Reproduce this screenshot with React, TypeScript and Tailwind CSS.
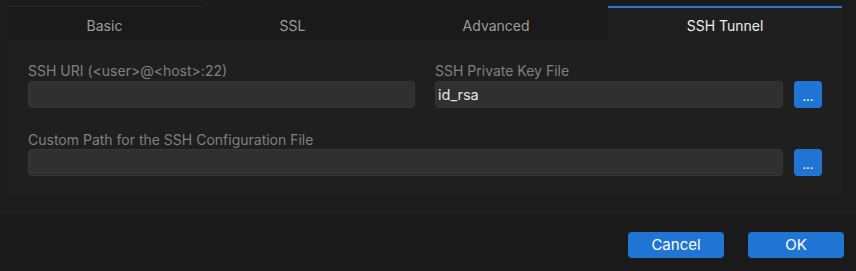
import React, { useState } from 'react';

type Tab = 'Basic' | 'SSL' | 'Advanced' | 'SSH Tunnel';

const TABS: Tab[] = ['Basic', 'SSL', 'Advanced', 'SSH Tunnel'];

const BrowseButton: React.FC = () => (
  <button className="w-[28px] h-[27px] shrink-0 rounded-[4px] bg-[#1f74d4] text-white text-[13px] leading-none flex items-center justify-center pt-[3px]">
    ...
  </button>
);

const Field: React.FC<{ value?: string; className?: string }> = ({ value = '', className = '' }) => (
  <input
    readOnly
    value={value}
    className={`h-[27px] min-w-0 rounded-[4px] bg-[#303030] border border-[#363636] pl-[2px] pr-[8px] text-[14.5px] text-[#e4e4e4] outline-none ${className}`}
  />
);

const App: React.FC = () => {
  const [active, setActive] = useState<Tab>('SSH Tunnel');

  return (
    <div className="w-[856px] h-[271px] bg-[#1c1c1c] flex flex-col font-['Inter',sans-serif] overflow-hidden">
      <div className="pt-[6px] pl-[8px] pr-[14px]">
        {/* tab strip */}
        <div className="relative flex h-[34px]">
          <div className="absolute left-0 top-0 w-[194px] h-px bg-[#2b2b2b]" />
          {TABS.map((t) =>
            t === active ? (
              <button
                key={t}
                onClick={() => setActive(t)}
                className="flex-auto flex items-center justify-center pt-[2px] bg-[#1f1f1f] border-t-2 border-[#2a7bd0] text-[14px] text-[#ececec]"
              >
                {t}
              </button>
            ) : (
              <button
                key={t}
                onClick={() => setActive(t)}
                className="flex-auto flex items-center justify-center pt-[4px] bg-[#1a1a1a] text-[14px] text-[#9c9c9c]"
              >
                {t}
              </button>
            )
          )}
        </div>

        {/* panel */}
        <div className="bg-[#1f1f1f] h-[154px] px-[20px] pt-[22px]">
          <div className="grid grid-cols-2 gap-x-[20px]">
            <div className="flex flex-col">
              <label className="h-[17px] leading-[17px] text-[14px] text-[#808080] mb-[2px]">
                SSH URI (&lt;user&gt;@&lt;host&gt;:22)
              </label>
              <Field className="w-full" />
            </div>
            <div className="flex flex-col">
              <label className="h-[17px] leading-[17px] text-[14px] text-[#808080] mb-[2px]">
                SSH Private Key File
              </label>
              <div className="flex gap-[11px]">
                <Field value="id_rsa" className="flex-1" />
                <BrowseButton />
              </div>
            </div>
          </div>

          <div className="flex flex-col mt-[23px]">
            <label className="h-[17px] leading-[17px] text-[14px] text-[#808080] mb-[1px]">
              Custom Path for the SSH Configuration File
            </label>
            <div className="flex gap-[11px]">
              <Field className="flex-1" />
              <BrowseButton />
            </div>
          </div>
        </div>
      </div>

      {/* footer */}
      <div className="mt-[18px] border-t border-[#242424] flex-1 bg-[#1a1a1a] flex justify-end items-start gap-[24px] pt-[19px] pr-[12px]">
        <button className="w-[96px] h-[26px] rounded-[4px] bg-[#1f74d4] text-white text-[15px]">Cancel</button>
        <button className="w-[96px] h-[26px] rounded-[4px] bg-[#1f74d4] text-white text-[15px]">OK</button>
      </div>
    </div>
  );
};

export default App;
